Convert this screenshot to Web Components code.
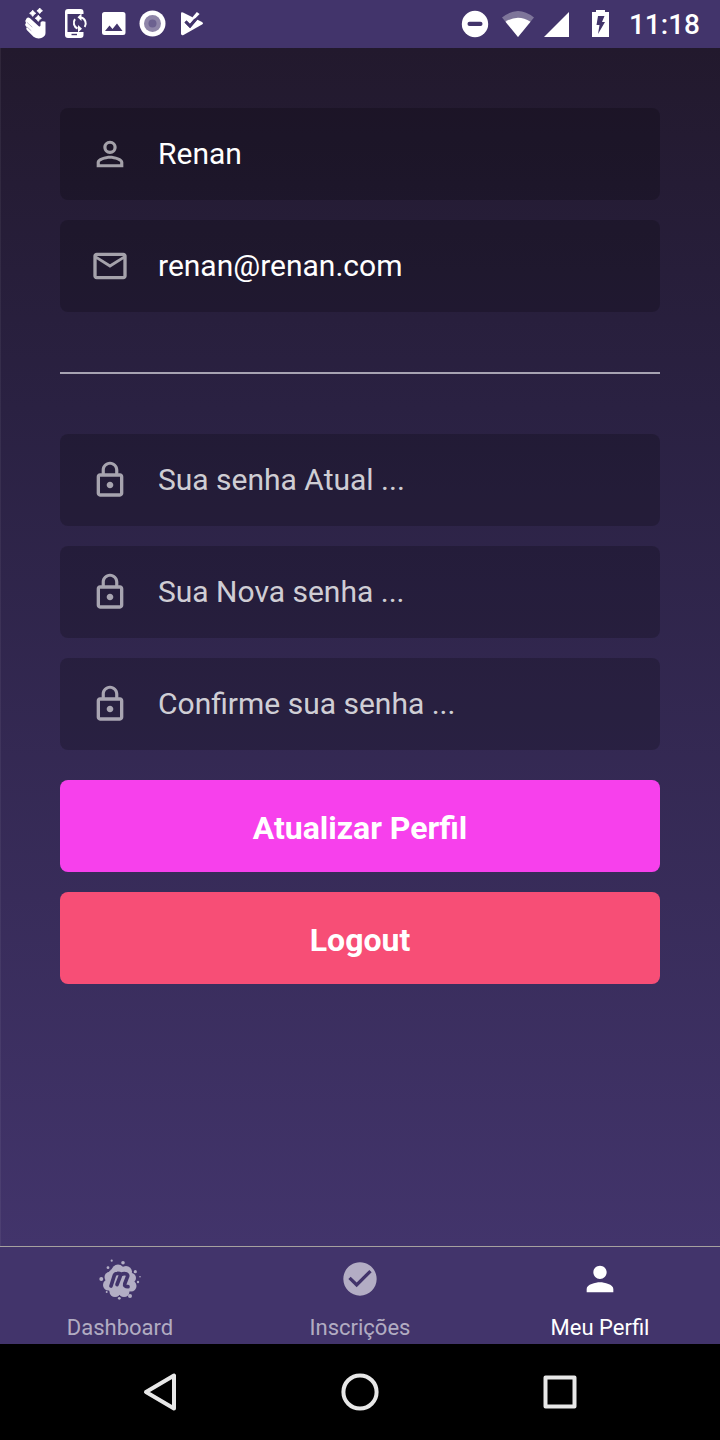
<!DOCTYPE html>
<html lang="pt-BR">
<head>
<meta charset="utf-8">
<meta name="viewport" content="width=device-width, initial-scale=1">
<title>Meu Perfil</title>
<style>
html, body { margin: 0; }
body { font-family: Roboto, sans-serif; background: #000; }
</style>
</head>
<body>
<profile-app></profile-app>
<script>
const define = (name, html, setup) => {
  const template = document.createElement('template');
  template.innerHTML = html;
  customElements.define(name, class extends HTMLElement {
    constructor() {
      super();
      this.attachShadow({ mode: 'open' }).append(template.content.cloneNode(true));
    }
    connectedCallback() {
      if (setup) setup(this, this.shadowRoot);
    }
  });
};

const icons = {
  person: '<path d="M12 5.9a2.1 2.1 0 1 1 0 4.2 2.1 2.1 0 0 1 0-4.2m0 9c2.97 0 6.1 1.46 6.1 2.1v1.1H5.9V17c0-.64 3.13-2.1 6.1-2.1M12 4C9.79 4 8 5.79 8 8s1.79 4 4 4 4-1.79 4-4-1.79-4-4-4zm0 9c-2.67 0-8 1.34-8 4v3h16v-3c0-2.66-5.33-4-8-4z"/>',
  mail: '<path d="M20 4H4c-1.1 0-1.99.9-1.99 2L2 18c0 1.1.9 2 2 2h16c1.1 0 2-.9 2-2V6c0-1.1-.9-2-2-2zm0 14H4V8l8 5 8-5v10zm-8-7L4 6h16l-8 5z"/>',
  lock: '<path d="M12 17c1.1 0 2-.9 2-2s-.9-2-2-2-2 .9-2 2 .9 2 2 2zm6-9h-1V6c0-2.76-2.24-5-5-5S7 3.24 7 6v2H6c-1.1 0-2 .9-2 2v10c0 1.1.9 2 2 2h12c1.1 0 2-.9 2-2V10c0-1.1-.9-2-2-2zM8.9 6c0-1.71 1.39-3.1 3.1-3.1s3.1 1.39 3.1 3.1v2H8.9V6zM18 20H6V10h12v10z"/>'
};

define('status-bar', `
<style>
:host { display: flex; height: 48px; padding: 0 20px 0 18px; background: #42346b; color: #fff; }
svg { display: block; fill: #fff; }
.group { display: flex; }
.system { margin-left: auto; }
time { font-size: 28px; font-weight: 500; line-height: 50px; }
</style>
<div class="group">
  <svg width="38" height="48" viewBox="0 0 38 48"><path d="M14.7 10.200l1.300 1.800 1.800 1.300-1.800 1.300-1.300 1.800-1.300-1.800-1.800-1.300 1.800-1.300zM21.700 8l1.200 1.600 1.600 1.200-1.600 1.200-1.200 1.600-1.200-1.600-1.600-1.200 1.600-1.200zM20.300 15.200l1.300 1.800 1.800 1.300-1.800 1.300-1.300 1.800-1.300-1.800-1.800-1.300 1.800-1.300z" stroke="#fff" stroke-width=".8" stroke-linejoin="round"/><path d="M8.500 18.500Q10 16.500 12 18.200L20.800 26.300Q22 27 22.500 25.500V22.500Q23.800 20.300 27.500 21.700V33Q27.500 36 24 37.800Q19.500 39.600 15.500 36.800L8.800 30Q7.600 28.600 8.800 27.600L7.400 25.600Q6.600 24 8 23Q6.600 20.500 8.500 18.500z"/><path d="M8.800 22.200l5.500 5M8.800 26.800l4.500 4" fill="none" stroke="#42346b" stroke-width=".5" opacity=".7"/></svg>
  <svg width="38" height="48" viewBox="0 0 38 48"><path d="M12 9h12.500a3 3 0 0 1 3 3v2h-16v18h16v3a3 3 0 0 1-3 3H12a3 3 0 0 1-3-3V12a3 3 0 0 1 3-3z"/><path d="M15.500 34.500h5.500" stroke="#42346b" stroke-width="1.400"/><path d="M21.500 28.300A6 6 0 0 1 19.200 19M25.500 17.500A6 6 0 0 1 28.500 27" fill="none" stroke="#42346b" stroke-width="5"/><path d="M21.500 28.500A6.200 6.200 0 0 1 19 19.200M25 17.500A6.200 6.200 0 0 1 28.700 27" fill="none" stroke="#fff" stroke-width="2"/><path d="M25.500 13.500v7.500l-4-3.700zM22 25v7.500l4-3.700z"/></svg>
  <svg width="38" height="48" viewBox="0 0 38 48"><path fill-rule="evenodd" d="M10.500 12h18.500a2.500 2.500 0 0 1 2.500 2.500v18a2.500 2.500 0 0 1-2.500 2.500H10.500A2.500 2.500 0 0 1 8 32.500v-18A2.500 2.500 0 0 1 10.500 12zM11 31h17.500l-5.500-7.500-4.500 5.500-3-3.500z"/></svg>
  <svg width="38" height="48" viewBox="0 0 38 48"><circle cx="20.500" cy="23.500" r="13"/><circle cx="20.500" cy="23.500" r="8.500" fill="#8e85a8"/><circle cx="20.500" cy="23.500" r="4" fill="#6c6190"/></svg>
  <svg width="38" height="48" viewBox="0 0 38 48"><path d="M13 12.500l19 9.500q2 1.300 0 2.600L13.500 35q-2.500.8-2.500-1.500V13.500q0-1.800 2-1z"/><path d="M15.500 21.500l4.500 4.500 9.500-11" fill="none" stroke="#42346b" stroke-width="3"/><path d="M22.300 17.400l4.500-5.400 2.800 2-5.200 5.300z"/><path d="M15.500 21.500l4.500 4.500 6-7" fill="none" stroke="#42346b" stroke-width="2.600"/></svg>
</div>
<div class="group system">
  <svg width="44" height="48" viewBox="0 0 44 48"><circle cx="22" cy="24" r="13.200"/><rect x="14.500" y="21.700" width="15" height="4.400" rx="2" fill="#42346b"/></svg>
  <svg width="44" height="48" viewBox="0 0 44 48"><path d="M5 17.500Q21 4.500 37 17.500L21 37z" opacity=".32"/><path d="M8.500 21.800Q21 13.500 33.500 21.800L21 37z"/></svg>
  <svg width="44" height="48" viewBox="0 0 44 48"><path d="M28 12v25H3z"/></svg>
  <svg width="44" height="48" viewBox="0 0 44 48"><path d="M11 10h9v2h4v25H7V12h4z"/><path d="M13 16h6.500l-2.500 6h3l-7 12 1.500-9H11.500z" fill="#42346b"/></svg>
  <time>11:18</time>
</div>`);

define('icon-field', `
<style>
:host { display: block; }
label { display: flex; align-items: center; height: 92px; padding: 0 30px; border-radius: 8px; background: rgba(0, 0, 0, .2); }
svg { flex: none; width: 40px; height: 40px; margin-right: 28px; fill: rgba(255, 255, 255, .6); }
input { flex: 1; min-width: 0; height: 60px; margin: 0; padding: 0 0 2px; box-sizing: border-box; border: 0; outline: 0; background: none; color: #fff; font-family: inherit; font-size: 30px; }
input::placeholder { color: rgba(255, 255, 255, .8); opacity: 1; }
</style>
<label><svg viewBox="0 0 24 24" aria-hidden="true"></svg><input></label>`, (host, root) => {
  root.querySelector('svg').innerHTML = icons[host.getAttribute('icon')];
  const input = root.querySelector('input');
  input.type = host.getAttribute('type') || 'text';
  input.value = host.getAttribute('value') || '';
  input.placeholder = host.getAttribute('placeholder') || '';
  input.setAttribute('aria-label', host.getAttribute('label'));
});

define('action-button', `
<style>
:host { display: block; }
button { display: block; width: 100%; height: 92px; margin: 0; padding: 4px 0 0; border: 0; border-radius: 8px; background: var(--fill); color: #fff; font-family: inherit; font-size: 32px; font-weight: 700; }
</style>
<button type="button"><slot></slot></button>`);

define('profile-form', `
<style>
:host { display: block; padding: 60px; }
.group { display: grid; gap: 20px; }
hr { height: 2px; margin: 60px 0; border: 0; background: #a7a3b2; }
.actions { margin-top: 30px; }
.update { --fill: #f740ec; }
.logout { --fill: #f74e76; }
</style>
<form>
  <div class="group">
    <icon-field icon="person" label="Nome" value="Renan"></icon-field>
    <icon-field icon="mail" type="email" label="E-mail" value="renan@renan.com"></icon-field>
  </div>
  <hr>
  <div class="group">
    <icon-field icon="lock" type="password" label="Senha atual" placeholder="Sua senha Atual ..."></icon-field>
    <icon-field icon="lock" type="password" label="Nova senha" placeholder="Sua Nova senha ..."></icon-field>
    <icon-field icon="lock" type="password" label="Confirmar senha" placeholder="Confirme sua senha ..."></icon-field>
  </div>
  <div class="group actions">
    <action-button class="update">Atualizar Perfil</action-button>
    <action-button class="logout">Logout</action-button>
  </div>
</form>`);

define('tab-item', `
<style>
:host { display: block; flex: 1; color: rgba(255, 255, 255, .6); }
:host([active]) { color: #fff; }
a { display: flex; flex-direction: column; align-items: center; gap: 16px; padding: 12px 0 3px; color: inherit; text-decoration: none; font-size: 22px; line-height: 26px; }
</style>
<a href="#"><slot name="icon"></slot><slot></slot></a>`, (host, root) => {
  if (host.hasAttribute('active')) root.querySelector('a').setAttribute('aria-current', 'page');
});

define('tab-bar', `
<style>
:host { display: block; background: #42346b; border-top: 1px solid #a6a19f; }
nav { display: flex; }
svg { display: block; width: 40px; height: 40px; overflow: visible; fill: currentColor; }
.splash { color: #b3aec4; }
</style>
<nav>
  <tab-item>
    <svg slot="icon" class="splash" viewBox="2 1 40 40">
      <circle cx="21.500" cy="23" r="14"/><circle cx="20" cy="13" r="6.500"/><circle cx="28" cy="14" r="6"/><circle cx="33" cy="20" r="5"/><circle cx="33" cy="28" r="5.500"/><circle cx="26" cy="33.500" r="5.500"/><circle cx="17" cy="33.500" r="5.500"/><circle cx="10.500" cy="27" r="5.500"/><circle cx="11.500" cy="19" r="5"/>
      <circle cx="13.700" cy="2.700" r="1.100"/><circle cx="25" cy="4.700" r="1.800"/><circle cx="10" cy="9.700" r="1.400"/><circle cx="3.300" cy="21" r="2"/><circle cx="37.300" cy="13.700" r="1.600"/><circle cx="42" cy="18.700" r=".8"/><circle cx="40" cy="24" r="1.200"/><circle cx="8.700" cy="34" r="1"/><circle cx="21.300" cy="40.300" r="1.400"/><circle cx="32" cy="38" r="2"/>
      <path d="M13 28l3.300-10.500q.8-2 2.700-2 2.500-.2 4 .8l-4 10.200M23 16.500q3-1.500 5.500-.5 1.700 1 1 2.700l-2.700 7q-.8 3 3.200 3" fill="none" stroke="#42346b" stroke-width="3.700" stroke-linecap="round" stroke-linejoin="round"/>
    </svg>Dashboard</tab-item>
  <tab-item><svg slot="icon" viewBox="0 0 24 24"><path d="M12 2C6.480 2 2 6.480 2 12s4.480 10 10 10 10-4.480 10-10S17.520 2 12 2zm-2 15l-5-5 1.410-1.410L10 14.170l7.590-7.590L19 8l-9 9z"/></svg>Inscrições</tab-item>
  <tab-item active><svg slot="icon" viewBox="0 0 24 24"><path d="M12 12c2.210 0 4-1.790 4-4s-1.790-4-4-4-4 1.790-4 4 1.790 4 4 4zm0 2c-2.670 0-8 1.340-8 4v2h16v-2c0-2.660-5.330-4-8-4z"/></svg>Meu Perfil</tab-item>
</nav>`);

define('system-nav', `
<style>
:host { display: flex; justify-content: center; height: 96px; padding: 0 60px; background: #000; }
button { flex: 1; display: grid; place-items: center; margin: 0; padding: 0; border: 0; background: none; }
svg { width: 40px; height: 40px; fill: none; stroke: #e8e8e8; stroke-width: 4; stroke-linejoin: round; }
</style>
<button type="button" aria-label="Voltar"><svg viewBox="0 0 40 40"><path d="M34 3.500v33L6 20z"/></svg></button>
<button type="button" aria-label="Início"><svg viewBox="0 0 40 40"><circle cx="20" cy="20" r="16.600"/></svg></button>
<button type="button" aria-label="Recentes"><svg viewBox="0 0 40 40"><path d="M5.500 5.500h29v29h-29z"/></svg></button>`);

define('profile-app', `
<style>
:host { display: flex; flex-direction: column; min-height: 100vh; }
main { flex: 1; background: linear-gradient(#22192d, #2a2142 30%, #42346b); box-shadow: inset 1px 0 rgba(255, 255, 255, .06); }
</style>
<status-bar></status-bar>
<main><profile-form></profile-form></main>
<tab-bar></tab-bar>
<system-nav></system-nav>`);
</script>
</body>
</html>
